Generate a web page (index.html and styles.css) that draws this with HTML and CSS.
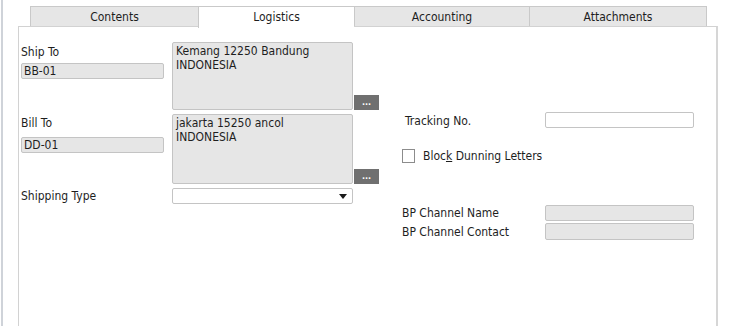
FILE: index.html
```html
<!DOCTYPE html>
<html lang="en">
<head>
    <meta charset="UTF-8">
    <title>Logistics</title>
    <link rel="stylesheet" href="styles.css">
</head>
<body>
    <div class="shell">
        <!-- Tab strip -->
        <div class="tabs">
            <div class="tab tab-contents">Contents</div>
            <div class="tab tab-logistics active">Logistics</div>
            <div class="tab tab-accounting">Accounting</div>
            <div class="tab tab-attachments">Attachments</div>
        </div>

        <!-- Logistics panel -->
        <div class="panel">
            <div class="left-grid">
                <div class="field-cell">
                    <div class="label ship-label">Ship To</div>
                    <input class="code" type="text" value="BB-01" readonly>
                </div>
                <div class="addr-cell">
                    <div class="addr">Kemang 12250 Bandung<br>INDONESIA</div>
                    <button class="more">...</button>
                </div>

                <div class="field-cell">
                    <div class="label bill-label">Bill To</div>
                    <input class="code bill-code" type="text" value="DD-01" readonly>
                </div>
                <div class="addr-cell">
                    <div class="addr">jakarta 15250 ancol<br>INDONESIA</div>
                    <button class="more">...</button>
                </div>

                <div class="label ship-type">Shipping Type</div>
                <div class="select"><span class="caret"></span></div>
            </div>

            <div class="right-col">
                <div class="row">
                    <div class="label rlabel tracking-label">Tracking No.</div>
                    <input class="rinput" type="text" value="" readonly>
                </div>
                <div class="row check-row">
                    <span class="checkbox"></span>
                    <span class="label">Bloc<u>k</u> Dunning Letters</span>
                </div>
                <div class="row bp-row">
                    <div class="label rlabel">BP Channel Name</div>
                    <input class="rinput grey" type="text" value="" readonly>
                </div>
                <div class="row bp-row2">
                    <div class="label rlabel">BP Channel Contact</div>
                    <input class="rinput grey tall" type="text" value="" readonly>
                </div>
            </div>
        </div>
    </div>
</body>
</html>
```

FILE: styles.css
```css
/* Global */
body {
    margin: 0;
    padding-left: 1px;
    background: #ffffff;
    color: #1e1e1e;
    font-family: "DejaVu Sans Condensed", "DejaVu Sans", sans-serif;
    font-stretch: condensed;
    font-size: 12px;
    overflow: hidden;
}

.shell {
    border-left: 2px solid #cfd3d9;
    padding-left: 15px;
    height: 326px;
    overflow: hidden;
}

/* Tabs */
.tabs {
    display: flex;
    margin-left: 12px;
    padding-top: 6px;
    height: 20px;
}

.tab {
    background: #e6e6e6;
    border: 1px solid #c9c9c9;
    border-bottom: none;
    border-right: none;
    text-align: center;
    line-height: 20px;
}

.tab-contents { width: 167px; }
.tab-logistics { width: 155px; }
.tab-accounting { width: 174px; }
.tab-attachments { width: 176px; border-right: 1px solid #c9c9c9; }

.tab.active {
    background: #ffffff;
    position: relative;
    height: 21px;
    z-index: 1;
}

/* Panel */
.panel {
    display: flex;
    width: 695px;
    height: 284px;
    border: 1px solid #d2d2d2;
    border-bottom: none;
    border-right: 2px solid #d6d6d6;
    padding: 15px 0 0 2px;
}

.label {
    line-height: 16px;
    white-space: nowrap;
}

input {
    font: inherit;
    color: inherit;
    box-sizing: border-box;
    margin: 0;
    outline: none;
}

/* Left block */
.left-grid {
    display: grid;
    grid-template-columns: 143px auto;
    grid-template-rows: 68px 70px 16px;
    column-gap: 8px;
    row-gap: 4px;
}

.field-cell {
    display: flex;
    flex-direction: column;
}

.ship-label { margin-top: 2px; }
.bill-label { margin-top: 1px; }

.code {
    width: 143px;
    height: 16px;
    margin-top: 3px;
    padding: 0 2px;
    background: #e6e6e6;
    border: 1px solid #c4c4c4;
    border-radius: 2px;
}

.bill-code { margin-top: 6px; }

.addr-cell {
    display: flex;
    align-items: flex-end;
    gap: 1px;
}

.addr {
    width: 181px;
    height: 100%;
    box-sizing: border-box;
    padding: 1px 3px;
    background: #e6e6e6;
    border: 1px solid #c4c4c4;
    border-radius: 2px;
    line-height: 14px;
}

.more {
    width: 25px;
    height: 15px;
    padding: 0;
    background: #707070;
    color: #ffffff;
    border: none;
    font-family: inherit;
    font-size: 9px;
    font-weight: bold;
    line-height: 15px;
}

.ship-type {
    align-self: center;
}

.select {
    width: 181px;
    height: 16px;
    box-sizing: border-box;
    background: #ffffff;
    border: 1px solid #c4c4c4;
    border-radius: 2px;
    display: flex;
    justify-content: flex-end;
    align-items: center;
    padding-right: 5px;
}

.caret {
    width: 0;
    height: 0;
    border-left: 4px solid transparent;
    border-right: 4px solid transparent;
    border-top: 5px solid #1a1a1a;
}

/* Right block */
.right-col {
    margin-left: 23px;
    padding-top: 70px;
}

.row {
    display: flex;
    align-items: center;
}

.rlabel { width: 143px; }

.tracking-label {
    width: 140px;
    padding: 1px 0 0 3px;
    margin-bottom: -1px;
}

.rinput {
    width: 149px;
    height: 16px;
    background: #ffffff;
    border: 1px solid #c4c4c4;
    border-radius: 2px;
}

.rinput.grey { background: #e6e6e6; }
.rinput.tall { height: 17px; }

.check-row {
    margin-top: 20px;
    gap: 8px;
}

.checkbox {
    display: inline-block;
    width: 13px;
    height: 14px;
    box-sizing: border-box;
    border: 1px solid #8c8c8c;
    background: #ffffff;
}

.bp-row { margin-top: 41px; }
.bp-row2 { margin-top: 2px; }
```
